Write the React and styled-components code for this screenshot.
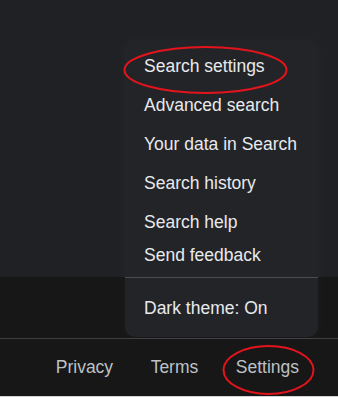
import React from "react";
import styled, { createGlobalStyle } from "styled-components";

const GlobalStyle = createGlobalStyle`
  html, body {
    margin: 0;
    padding: 0;
    background: #171717;
  }
  body {
    font-family: "Liberation Sans", Arial, sans-serif;
  }
`;

const menuItems = [
  { label: "Search settings", height: 39 },
  { label: "Advanced search", height: 39 },
  { label: "Your data in Search", height: 39 },
  { label: "Search history", height: 39 },
  { label: "Search help", height: 39 },
  { label: "Send feedback", height: 27 },
];

const footerLinks = ["Privacy", "Terms", "Settings"];

const App = () => {
  return (
    <Page>
      <GlobalStyle />
      <Main />
      <Band />
      <Footer>
        {footerLinks.map((l) => (
          <FooterLink key={l}>{l}</FooterLink>
        ))}
      </Footer>
      <BottomEdge />

      <Menu>
        {menuItems.map((item) => (
          <MenuItem key={item.label} $h={item.height}>
            {item.label}
          </MenuItem>
        ))}
        <Divider />
        <MenuItem $h={39} $spaced>
          Dark theme: On
        </MenuItem>
      </Menu>

      {/* red annotation marks */}
      <Marks width="338" height="397" viewBox="0 0 338 397">
        <ellipse cx="205.5" cy="70" rx="81" ry="23" />
        <ellipse cx="268.5" cy="370" rx="45" ry="24" />
      </Marks>
    </Page>
  );
};

const Page = styled.div`
  position: relative;
  width: 338px;
  height: 397px;
  overflow: hidden;
  display: flex;
  flex-direction: column;
`;

const Main = styled.div`
  height: 277px;
  background: #202124;
`;

const Band = styled.div`
  height: 61px;
  background: #171717;
`;

const Footer = styled.footer`
  height: 57px;
  border-top: 1px solid #3c4043;
  background: #171717;
  display: flex;
  align-items: center;
  justify-content: flex-end;
  gap: 37.5px;
  padding-right: 39px;
`;

const FooterLink = styled.a`
  color: #bdc1c6;
  font-size: 17.5px;
  text-decoration: none;
  cursor: pointer;
`;

const BottomEdge = styled.div`
  height: 1px;
  background: #d4d4d4;
`;

const Menu = styled.div`
  position: absolute;
  left: 125px;
  top: 40px;
  width: 193px;
  height: 297px;
  box-sizing: border-box;
  padding-top: 7px;
  background: #232428;
  border-radius: 10px;
  box-shadow: 0 0 10px 2px rgba(255, 255, 255, 0.025);
  display: flex;
  flex-direction: column;
`;

const MenuItem = styled.div`
  height: ${(p) => p.$h}px;
  margin-top: ${(p) => (p.$spaced ? 11 : 0)}px;
  display: flex;
  align-items: center;
  padding-left: 19px;
  color: #e8eaed;
  font-size: 17.5px;
  white-space: nowrap;
`;

const Divider = styled.div`
  height: 1px;
  margin-top: 8px;
  background: #4a4c50;
`;

const Marks = styled.svg`
  position: absolute;
  left: 0;
  top: 0;
  pointer-events: none;

  ellipse {
    fill: none;
    stroke: #e3141c;
    stroke-width: 2;
  }
`;

export default App;
